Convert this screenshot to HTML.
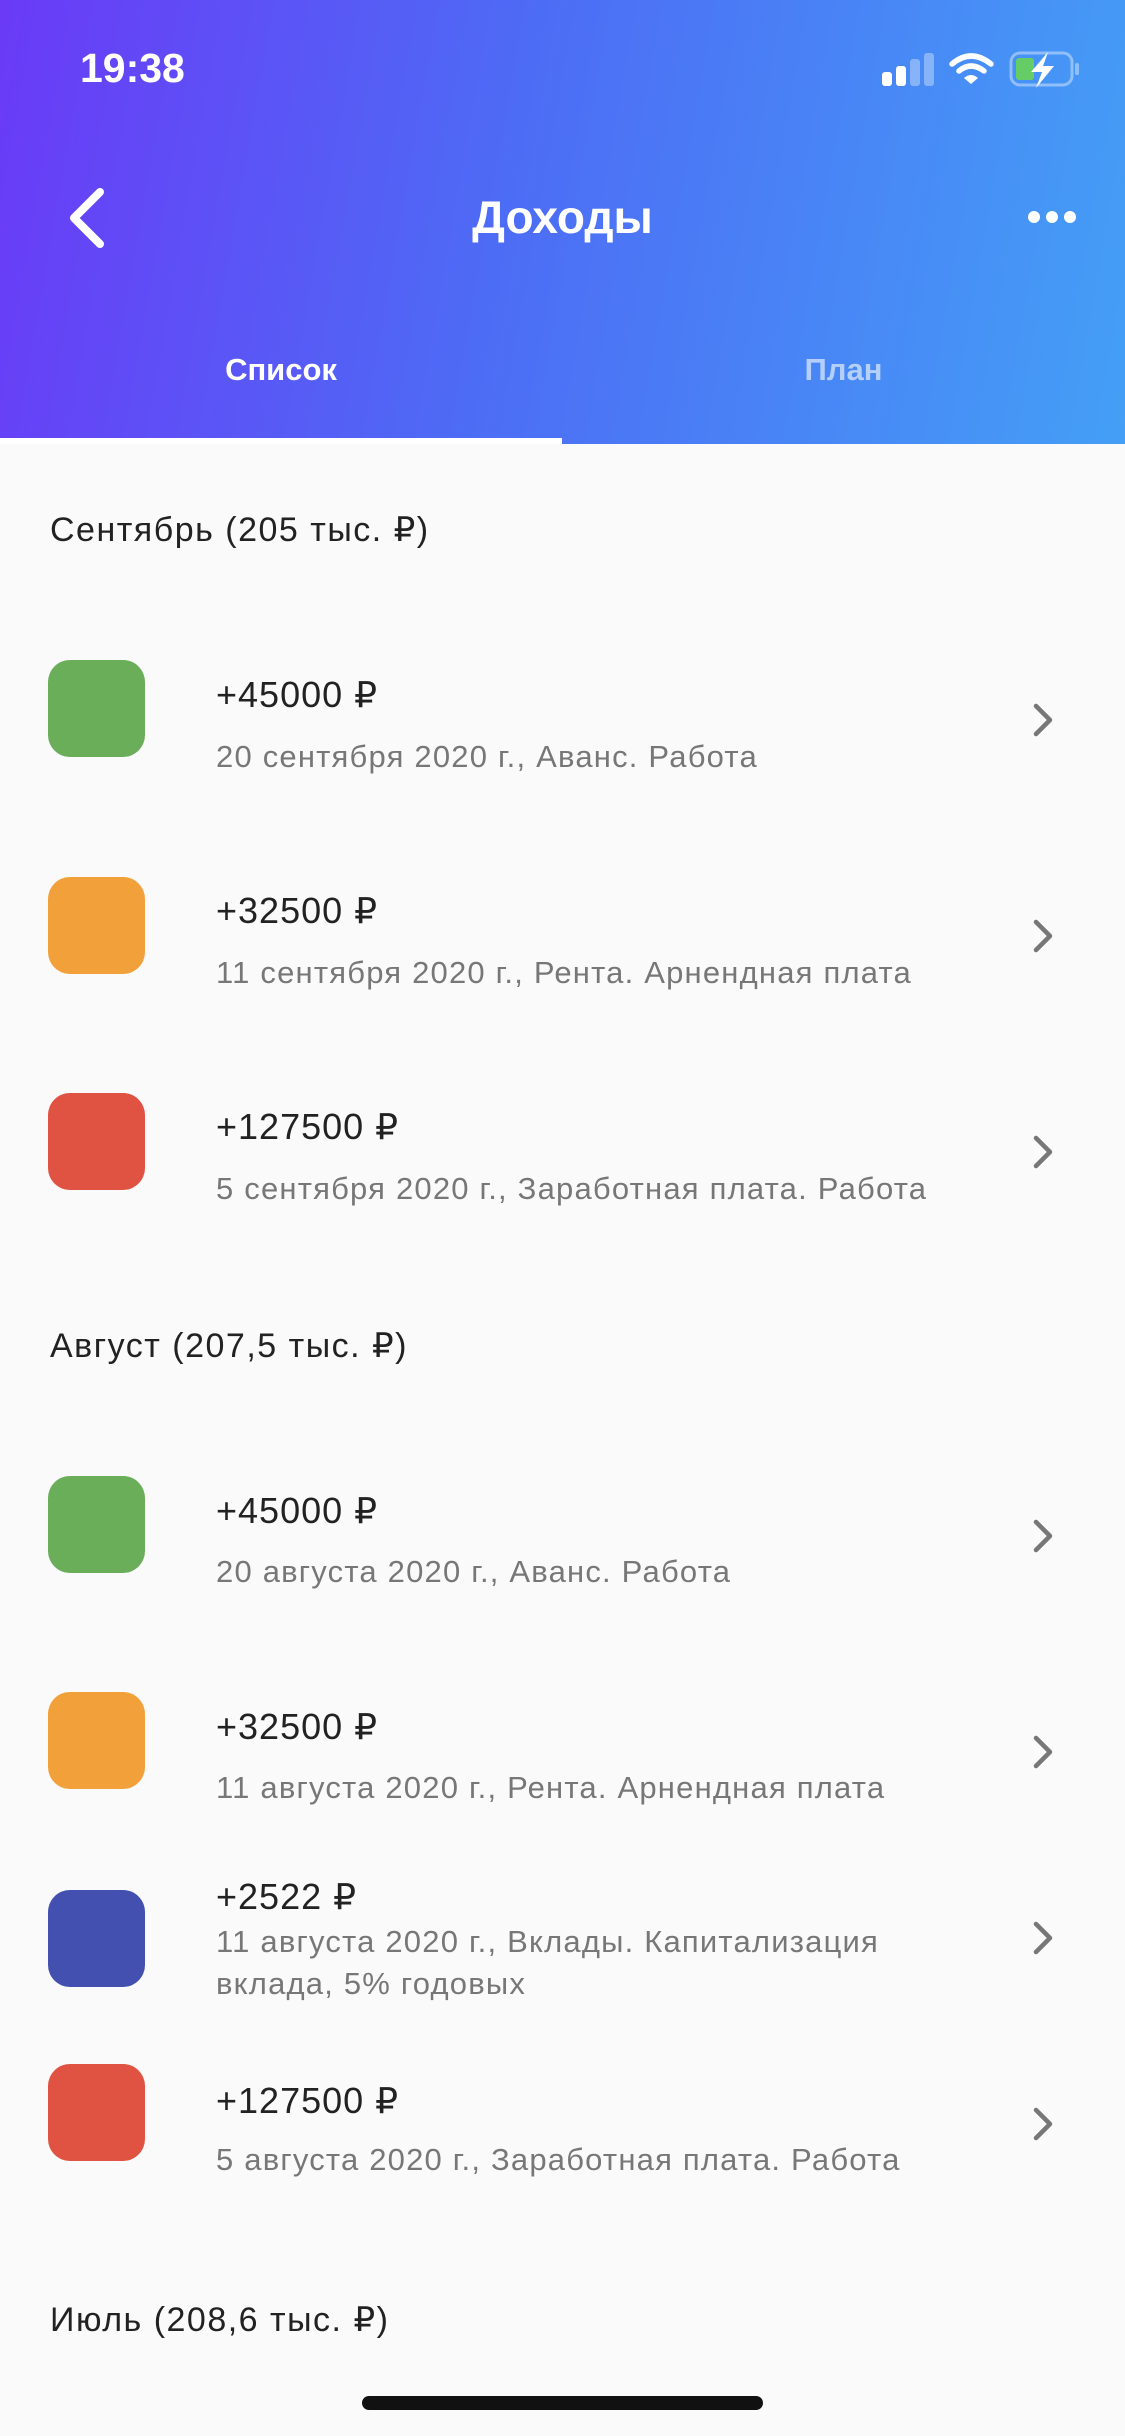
<!DOCTYPE html>
<html><head><meta charset="utf-8"><style>
*{margin:0;padding:0;box-sizing:border-box}
body{width:1125px;height:2436px;background:#fafafa;font-family:"Liberation Sans","DejaVu Sans",sans-serif;position:relative;overflow:hidden;color:#222}
.hdr{position:absolute;left:0;top:0;width:1125px;height:444px;background:linear-gradient(100deg,#6a3af6 0%,#4d6cf5 45%,#449ff6 100%)}
.a{position:absolute;white-space:nowrap}
.sq{position:absolute;left:48px;width:97px;height:97px;border-radius:22px}
.amt{position:absolute;left:216px;font-size:36px;line-height:44px;color:#222;letter-spacing:1px}
.sub{position:absolute;left:216px;font-size:31px;line-height:40px;color:#777;letter-spacing:1.2px}
.sec{position:absolute;left:50px;font-size:34px;line-height:44px;color:#222;letter-spacing:1.5px}
.chev{position:absolute;left:1030px;width:26px;height:40px}
</style></head><body>
<div class="hdr"></div>
<div class="a" style="left:80px;top:46px;font-size:41px;font-weight:bold;color:#fff;line-height:44px">19:38</div>
<svg class="a" style="left:880px;top:50px" width="200" height="40" viewBox="880 50 200 40">
<rect x="882" y="72" width="10" height="14" rx="3" fill="#fff"/>
<rect x="896" y="66" width="10" height="20" rx="3" fill="#fff"/>
<rect x="910" y="59" width="10" height="27" rx="3" fill="#fff" opacity=".35"/>
<rect x="924" y="53" width="10" height="33" rx="3" fill="#fff" opacity=".35"/>
<path d="M952 64 Q971 48 991 64" stroke="#fff" stroke-width="5.5" fill="none" stroke-linecap="round"/>
<path d="M959 71 Q971 61 984 71" stroke="#fff" stroke-width="5.5" fill="none" stroke-linecap="round"/>
<path d="M964 78 L971 84 L978 78 Q971 72 964 78Z" fill="#fff"/>
<rect x="1011" y="53" width="61" height="32" rx="9" stroke="#fff" stroke-opacity=".4" stroke-width="3" fill="none"/>
<rect x="1075" y="63" width="4" height="12" rx="2" fill="#fff" opacity=".4"/>
<rect x="1016" y="58" width="18" height="22" rx="3" fill="#66cc66"/>
<path d="M1048 52 L1031 72 L1042 72 L1036 88 L1054 66 L1043 66 Z" fill="#fff"/>
</svg>
<svg class="a" style="left:64px;top:188px" width="44" height="60"><path d="M36 4 L10 30 L36 56" stroke="#fff" stroke-width="8" fill="none" stroke-linecap="round" stroke-linejoin="round"/></svg>
<div class="a" style="left:0;width:1125px;text-align:center;top:190px;font-size:46px;font-weight:bold;color:#fff;line-height:54px">Доходы</div>
<svg class="a" style="left:1025px;top:205px" width="60" height="24"><circle cx="9" cy="12" r="6" fill="#fff"/><circle cx="27" cy="12" r="6" fill="#fff"/><circle cx="45" cy="12" r="6" fill="#fff"/></svg>
<div class="a" style="left:0;width:562px;text-align:center;top:351px;font-size:31px;font-weight:bold;color:#fff;line-height:38px">Список</div>
<div class="a" style="left:562px;width:563px;text-align:center;top:351px;font-size:31px;font-weight:bold;color:rgba(255,255,255,.6);line-height:38px">План</div>
<div class="a" style="left:0;top:438px;width:562px;height:6px;background:#fff"></div>

<div class="sec" style="top:508px">Сентябрь (205 тыс. ₽)</div>
<div class="sq" style="top:660px;background:#6aae5a"></div>
<div class="amt" style="top:673px">+45000 ₽</div>
<div class="sub" style="top:737px">20 сентября 2020 г., Аванс. Работа</div>
<svg class="chev" style="top:700px" viewBox="0 0 26 40"><path d="M6 6 L20 20 L6 34" stroke="#777" stroke-width="4.5" fill="none" stroke-linecap="round" stroke-linejoin="round"/></svg>

<div class="sq" style="top:877px;background:#f2a03a"></div>
<div class="amt" style="top:889px">+32500 ₽</div>
<div class="sub" style="top:953px">11 сентября 2020 г., Рента. Арнендная плата</div>
<svg class="chev" style="top:916px" viewBox="0 0 26 40"><path d="M6 6 L20 20 L6 34" stroke="#777" stroke-width="4.5" fill="none" stroke-linecap="round" stroke-linejoin="round"/></svg>

<div class="sq" style="top:1093px;background:#e05242"></div>
<div class="amt" style="top:1105px">+127500 ₽</div>
<div class="sub" style="top:1169px">5 сентября 2020 г., Заработная плата. Работа</div>
<svg class="chev" style="top:1132px" viewBox="0 0 26 40"><path d="M6 6 L20 20 L6 34" stroke="#777" stroke-width="4.5" fill="none" stroke-linecap="round" stroke-linejoin="round"/></svg>

<div class="sec" style="top:1324px">Август (207,5 тыс. ₽)</div>
<div class="sq" style="top:1476px;background:#6aae5a"></div>
<div class="amt" style="top:1489px">+45000 ₽</div>
<div class="sub" style="top:1552px">20 августа 2020 г., Аванс. Работа</div>
<svg class="chev" style="top:1516px" viewBox="0 0 26 40"><path d="M6 6 L20 20 L6 34" stroke="#777" stroke-width="4.5" fill="none" stroke-linecap="round" stroke-linejoin="round"/></svg>

<div class="sq" style="top:1692px;background:#f2a03a"></div>
<div class="amt" style="top:1705px">+32500 ₽</div>
<div class="sub" style="top:1768px">11 августа 2020 г., Рента. Арнендная плата</div>
<svg class="chev" style="top:1732px" viewBox="0 0 26 40"><path d="M6 6 L20 20 L6 34" stroke="#777" stroke-width="4.5" fill="none" stroke-linecap="round" stroke-linejoin="round"/></svg>

<div class="sq" style="top:1890px;background:#4350b0"></div>
<div class="amt" style="top:1875px">+2522 ₽</div>
<div class="sub" style="top:1922px">11 августа 2020 г., Вклады. Капитализация</div>
<div class="sub" style="top:1964px">вклада, 5% годовых</div>
<svg class="chev" style="top:1918px" viewBox="0 0 26 40"><path d="M6 6 L20 20 L6 34" stroke="#777" stroke-width="4.5" fill="none" stroke-linecap="round" stroke-linejoin="round"/></svg>

<div class="sq" style="top:2064px;background:#e05242"></div>
<div class="amt" style="top:2079px">+127500 ₽</div>
<div class="sub" style="top:2140px">5 августа 2020 г., Заработная плата. Работа</div>
<svg class="chev" style="top:2104px" viewBox="0 0 26 40"><path d="M6 6 L20 20 L6 34" stroke="#777" stroke-width="4.5" fill="none" stroke-linecap="round" stroke-linejoin="round"/></svg>

<div class="sec" style="top:2298px">Июль (208,6 тыс. ₽)</div>
<div class="a" style="left:362px;top:2396px;width:401px;height:14px;border-radius:7px;background:#111"></div>
</body></html>
